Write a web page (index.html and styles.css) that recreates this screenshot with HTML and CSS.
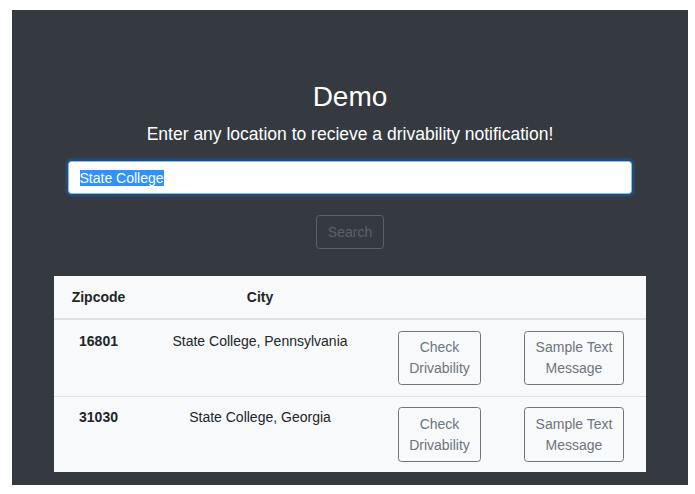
FILE: index.html
```html
<!DOCTYPE html>
<html lang="en">
<head>
  <meta charset="UTF-8" />
  <meta name="viewport" content="width=device-width, initial-scale=1.0"/>
  <title>Demo</title>
  <link rel="stylesheet" href="styles.css">
</head>
<body>
  <div class="jumbotron">
    <h2 class="titulo">Demo</h2>
    <p class="lead">Enter any location to recieve a drivability notification!</p>

    <form class="busca" onsubmit="return false">
      <input id="local" class="campo" type="text" value="State College" autofocus>
      <button class="botao-busca" type="button" disabled>Search</button>
    </form>

    <table class="tabela">
      <thead>
        <tr>
          <th class="col-zip">Zipcode</th>
          <th class="col-city">City</th>
          <th class="col-check"></th>
          <th class="col-sample"></th>
        </tr>
      </thead>
      <tbody>
        <tr>
          <th>16801</th>
          <td>State College, Pennsylvania</td>
          <td><button class="botao-tabela" type="button">Check<br>Drivability</button></td>
          <td><button class="botao-tabela" type="button">Sample Text<br>Message</button></td>
        </tr>
        <tr>
          <th>31030</th>
          <td>State College, Georgia</td>
          <td><button class="botao-tabela" type="button">Check<br>Drivability</button></td>
          <td><button class="botao-tabela" type="button">Sample Text<br>Message</button></td>
        </tr>
      </tbody>
    </table>
  </div>

  <script>
    const campo = document.getElementById('local');
    campo.focus();
    campo.select();
  </script>
</body>
</html>
```

FILE: styles.css
```css
body {
  margin: 0;
  padding: 10px 7px 10px 12px;
  font-family: "Liberation Sans", Arial, sans-serif;
  font-size: 14px;
  line-height: 1.5;
  color: #212529;
  background-color: #fff;
}

.jumbotron {
  background-color: #343a40;
  padding: 70px 42px 12.5px;
}

.titulo {
  margin: 0 0 7px;
  font-size: 28px;
  font-weight: normal;
  line-height: 1.2;
  text-align: center;
  color: #fff;
}

.lead {
  margin: 0 0 14px;
  font-size: 17.5px;
  text-align: center;
  color: #fff;
}

.busca {
  display: flex;
  flex-direction: column;
  align-items: center;
  padding: 0 14px;
  margin: 0;
}

.campo {
  box-sizing: border-box;
  width: 100%;
  height: 33.5px;
  padding: 5.25px 10.5px;
  font-family: inherit;
  font-size: 14px;
  line-height: 1.5;
  color: #495057;
  background-color: #fff;
  border: 1px solid #80bdff;
  border-radius: 3.5px;
  outline: none;
  box-shadow: 0 0 0 2.8px rgba(0, 123, 255, 0.25);
}

.campo::selection {
  background-color: #3390ff;
  color: #fff;
}

.botao-busca {
  margin: 21px 0 27.5px;
  padding: 5.25px 10.5px;
  font-family: inherit;
  font-size: 14px;
  line-height: 1.5;
  color: #6c757d;
  background: transparent;
  border: 1px solid #6c757d;
  border-radius: 3.5px;
  opacity: 0.7;
}

.tabela {
  width: 100%;
  table-layout: fixed;
  border-collapse: collapse;
  background-color: #f8f9fa;
}

.tabela th,
.tabela td {
  box-sizing: border-box;
  padding: 10.5px;
  text-align: center;
  vertical-align: top;
}

.tabela thead th {
  vertical-align: bottom;
  border-bottom: 2px solid #dee2e6;
}

.tabela tbody th,
.tabela tbody td {
  border-top: 1px solid #dee2e6;
}

.col-zip { width: 89px; }
.col-city { width: 234px; }
.col-check { width: 125px; }
.col-sample { width: 144px; }

.botao-tabela {
  padding: 5.25px 10.5px;
  font-family: inherit;
  font-size: 14px;
  line-height: 1.5;
  color: #6c757d;
  background: transparent;
  border: 1px solid #6c757d;
  border-radius: 3.5px;
}
```
